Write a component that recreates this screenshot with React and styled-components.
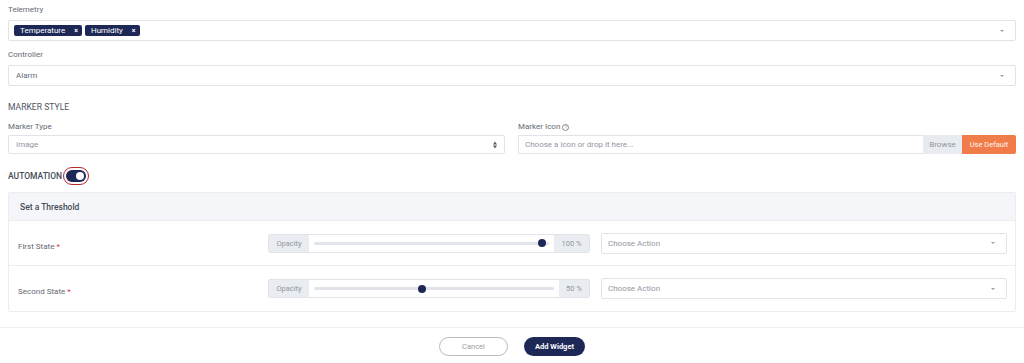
import styled, { createGlobalStyle } from "styled-components";

const NAVY = "#1d2856";

const GlobalStyle = createGlobalStyle`
  body {
    margin: 0;
    background: #ffffff;
    font-family: Roboto, "Liberation Sans", sans-serif;
    color: #646973;
  }
`;

const thresholds = [
  { name: "First State", value: 100, pos: 97 },
  { name: "Second State", value: 50, pos: 45 },
];

const App = () => {
  return (
    <>
      <GlobalStyle />
      <Page>
        <Label $top={5}>Telemetry</Label>
        <Box $h={21}>
          <Chip>
            Temperature <span>×</span>
          </Chip>
          <Chip>
            Humidity <span>×</span>
          </Chip>
          <Caret />
        </Box>

        <Label $top={9}>Controller</Label>
        <Box $h={21}>
          <Value>Alarm</Value>
          <Caret />
        </Box>

        <SectionTitle>MARKER STYLE</SectionTitle>
        <Columns>
          <div>
            <Label $top={0}>Marker Type</Label>
            <Box $h={19} $top={3}>
              <Value $muted>Image</Value>
              <UpDown>
                <i />
                <b />
              </UpDown>
            </Box>
          </div>
          <div>
            <Label $top={0}>
              Marker Icon
              <Help>?</Help>
            </Label>
            <FileGroup>
              <FileText>Choose a icon or drop it here...</FileText>
              <Browse>Browse</Browse>
              <UseDefault>Use Default</UseDefault>
            </FileGroup>
          </div>
        </Columns>

        <AutomationRow>
          AUTOMATION
          <Toggle>
            <Pill>
              <Knob />
            </Pill>
          </Toggle>
        </AutomationRow>

        <Panel>
          <PanelHeader>Set a Threshold</PanelHeader>
          {thresholds.map((t, i) => (
            <StateRow key={t.name} $last={i === thresholds.length - 1}>
              <StateName>
                {t.name} <Star>*</Star>
              </StateName>
              <SliderGroup>
                <Addon $w={40}>Opacity</Addon>
                <TrackArea>
                  <Track>
                    <Thumb style={{ left: `${t.pos}%` }} />
                  </Track>
                </TrackArea>
                <Addon $w={t.value === 100 ? 35 : 30}>{t.value} %</Addon>
              </SliderGroup>
              <ActionSelect>
                <Value $muted>Choose Action</Value>
                <Caret />
              </ActionSelect>
            </StateRow>
          ))}
        </Panel>
      </Page>

      <Footer>
        <CancelButton>Cancel</CancelButton>
        <AddButton>Add Widget</AddButton>
      </Footer>
    </>
  );
};

export default App;

const Page = styled.div`
  padding: 0 8px;
`;

const Label = styled.div`
  margin-top: ${(p) => p.$top}px;
  height: 10px;
  line-height: 10px;
  font-size: 8px;
  color: #646973;
  display: flex;
  align-items: center;
  gap: 2px;
`;

const Box = styled.div`
  position: relative;
  margin-top: ${(p) => (p.$top !== undefined ? p.$top : 5)}px;
  height: ${(p) => p.$h}px;
  box-sizing: border-box;
  border: 1px solid #e1e3e8;
  border-radius: 2px;
  display: flex;
  align-items: center;
  gap: 3px;
  padding: 0 5px;
`;

const Chip = styled.span`
  height: 11px;
  display: inline-flex;
  align-items: center;
  gap: 9px;
  padding: 0 4px 0 6px;
  border-radius: 2px;
  background: ${NAVY};
  color: #ffffff;
  font-size: 8px;
  font-weight: 400;

  span {
    font-size: 7px;
    font-weight: 700;
  }
`;

const Value = styled.span`
  padding-left: 2px;
  font-size: 8px;
  color: ${(p) => (p.$muted ? "#92969f" : "#646973")};
`;

const Caret = styled.span`
  position: absolute;
  right: 11px;
  top: 50%;
  margin-top: -1px;
  border-left: 2.5px solid transparent;
  border-right: 2.5px solid transparent;
  border-top: 2.5px solid #9a9ea6;
`;

const UpDown = styled.span`
  position: absolute;
  right: 7px;
  top: 50%;
  transform: translateY(-50%);
  display: flex;
  flex-direction: column;
  gap: 1px;

  i,
  b {
    border-left: 2.5px solid transparent;
    border-right: 2.5px solid transparent;
  }
  i {
    border-bottom: 3px solid #555b66;
  }
  b {
    border-top: 3px solid #555b66;
  }
`;

const SectionTitle = styled.div`
  margin-top: 16px;
  height: 10px;
  line-height: 10px;
  font-size: 8.6px;
  color: #50555f;
`;

const Columns = styled.div`
  margin-top: 10px;
  display: grid;
  grid-template-columns: 497px 1fr;
  column-gap: 13px;
`;

const Help = styled.span`
  width: 5px;
  height: 5px;
  border: 0.8px solid #888;
  border-radius: 50%;
  font-size: 4.5px;
  line-height: 5px;
  text-align: center;
  color: #888;
`;

const FileGroup = styled.div`
  margin-top: 3px;
  height: 19px;
  display: flex;
`;

const FileText = styled.div`
  flex: 1;
  box-sizing: border-box;
  border: 1px solid #e1e3e8;
  border-right: none;
  border-radius: 2px 0 0 2px;
  display: flex;
  align-items: center;
  padding-left: 6px;
  font-size: 8px;
  color: #92969f;
`;

const Browse = styled.div`
  width: 39px;
  display: flex;
  align-items: center;
  justify-content: center;
  background: #e8ebf0;
  font-size: 8px;
  color: #92969f;
`;

const UseDefault = styled.div`
  width: 54px;
  display: flex;
  align-items: center;
  justify-content: center;
  background: #f07c4a;
  border-radius: 0 2px 2px 0;
  font-size: 7.5px;
  color: #fff3ec;
`;

const AutomationRow = styled.div`
  margin-top: 13px;
  height: 18px;
  display: flex;
  align-items: center;
  font-size: 8.5px;
  font-weight: 500;
  color: #454b56;
`;

const Toggle = styled.span`
  margin-left: 1px;
  width: 26px;
  height: 18px;
  box-sizing: border-box;
  border: 1.5px solid #b9262d;
  border-radius: 9px;
  padding: 2px;
  display: flex;
`;

const Pill = styled.span`
  flex: 1;
  border-radius: 6px;
  background: ${NAVY};
  display: flex;
  align-items: center;
  justify-content: flex-end;
  padding-right: 2px;
`;

const Knob = styled.span`
  width: 8px;
  height: 8px;
  border-radius: 50%;
  background: #ffffff;
`;

const Panel = styled.div`
  margin-top: 7px;
  border: 1px solid #ebedf1;
  border-radius: 2px;
`;

const PanelHeader = styled.div`
  height: 27px;
  display: flex;
  align-items: center;
  padding-left: 11px;
  background: #f5f6f9;
  border-bottom: 1px solid #ebedf1;
  font-size: 8.5px;
  font-weight: 500;
  color: #454b56;
`;

const StateRow = styled.div`
  height: ${(p) => (p.$last ? 45 : 44)}px;
  display: grid;
  grid-template-columns: 239px 322px 1fr;
  column-gap: 11px;
  align-items: center;
  padding: 0 8px 0 9px;
  border-bottom: ${(p) => (p.$last ? "none" : "1px solid #ebedf1")};
`;

const StateName = styled.div`
  padding-top: 6px;
  font-size: 8px;
  color: #646973;
`;

const Star = styled.span`
  color: #e0383e;
`;

const SliderGroup = styled.div`
  height: 19px;
  display: flex;
  box-sizing: border-box;
  border: 1px solid #e1e3e8;
  border-radius: 2px;
  overflow: hidden;
`;

const Addon = styled.div`
  width: ${(p) => p.$w}px;
  display: flex;
  align-items: center;
  justify-content: center;
  background: #e9ecf1;
  font-size: 7.5px;
  color: #92969f;
`;

const TrackArea = styled.div`
  flex: 1;
  display: flex;
  align-items: center;
  padding: 0 5px;
`;

const Track = styled.div`
  position: relative;
  flex: 1;
  height: 3px;
  border-radius: 2px;
  background: #e1e4ea;
`;

const Thumb = styled.span`
  position: absolute;
  top: 50%;
  width: 8px;
  height: 8px;
  margin: -4px 0 0 -4px;
  border-radius: 50%;
  background: ${NAVY};
`;

const ActionSelect = styled.div`
  position: relative;
  height: 21px;
  box-sizing: border-box;
  border: 1px solid #e1e3e8;
  border-radius: 2px;
  display: flex;
  align-items: center;
  padding-left: 4px;
`;

const Footer = styled.div`
  margin-top: 15px;
  border-top: 1px solid #eceef2;
  padding-top: 9px;
  display: flex;
  justify-content: center;
  gap: 16px;
`;

const CancelButton = styled.button`
  width: 69px;
  height: 19px;
  border: 1px solid #b9bcc3;
  border-radius: 10px;
  background: #ffffff;
  font-family: Roboto, "Liberation Sans", sans-serif;
  font-size: 7.5px;
  color: #9a9ea6;
`;

const AddButton = styled.button`
  width: 61px;
  height: 19px;
  border: none;
  border-radius: 10px;
  background: ${NAVY};
  font-family: Roboto, "Liberation Sans", sans-serif;
  font-size: 7.5px;
  font-weight: 700;
  color: #ffffff;
`;
